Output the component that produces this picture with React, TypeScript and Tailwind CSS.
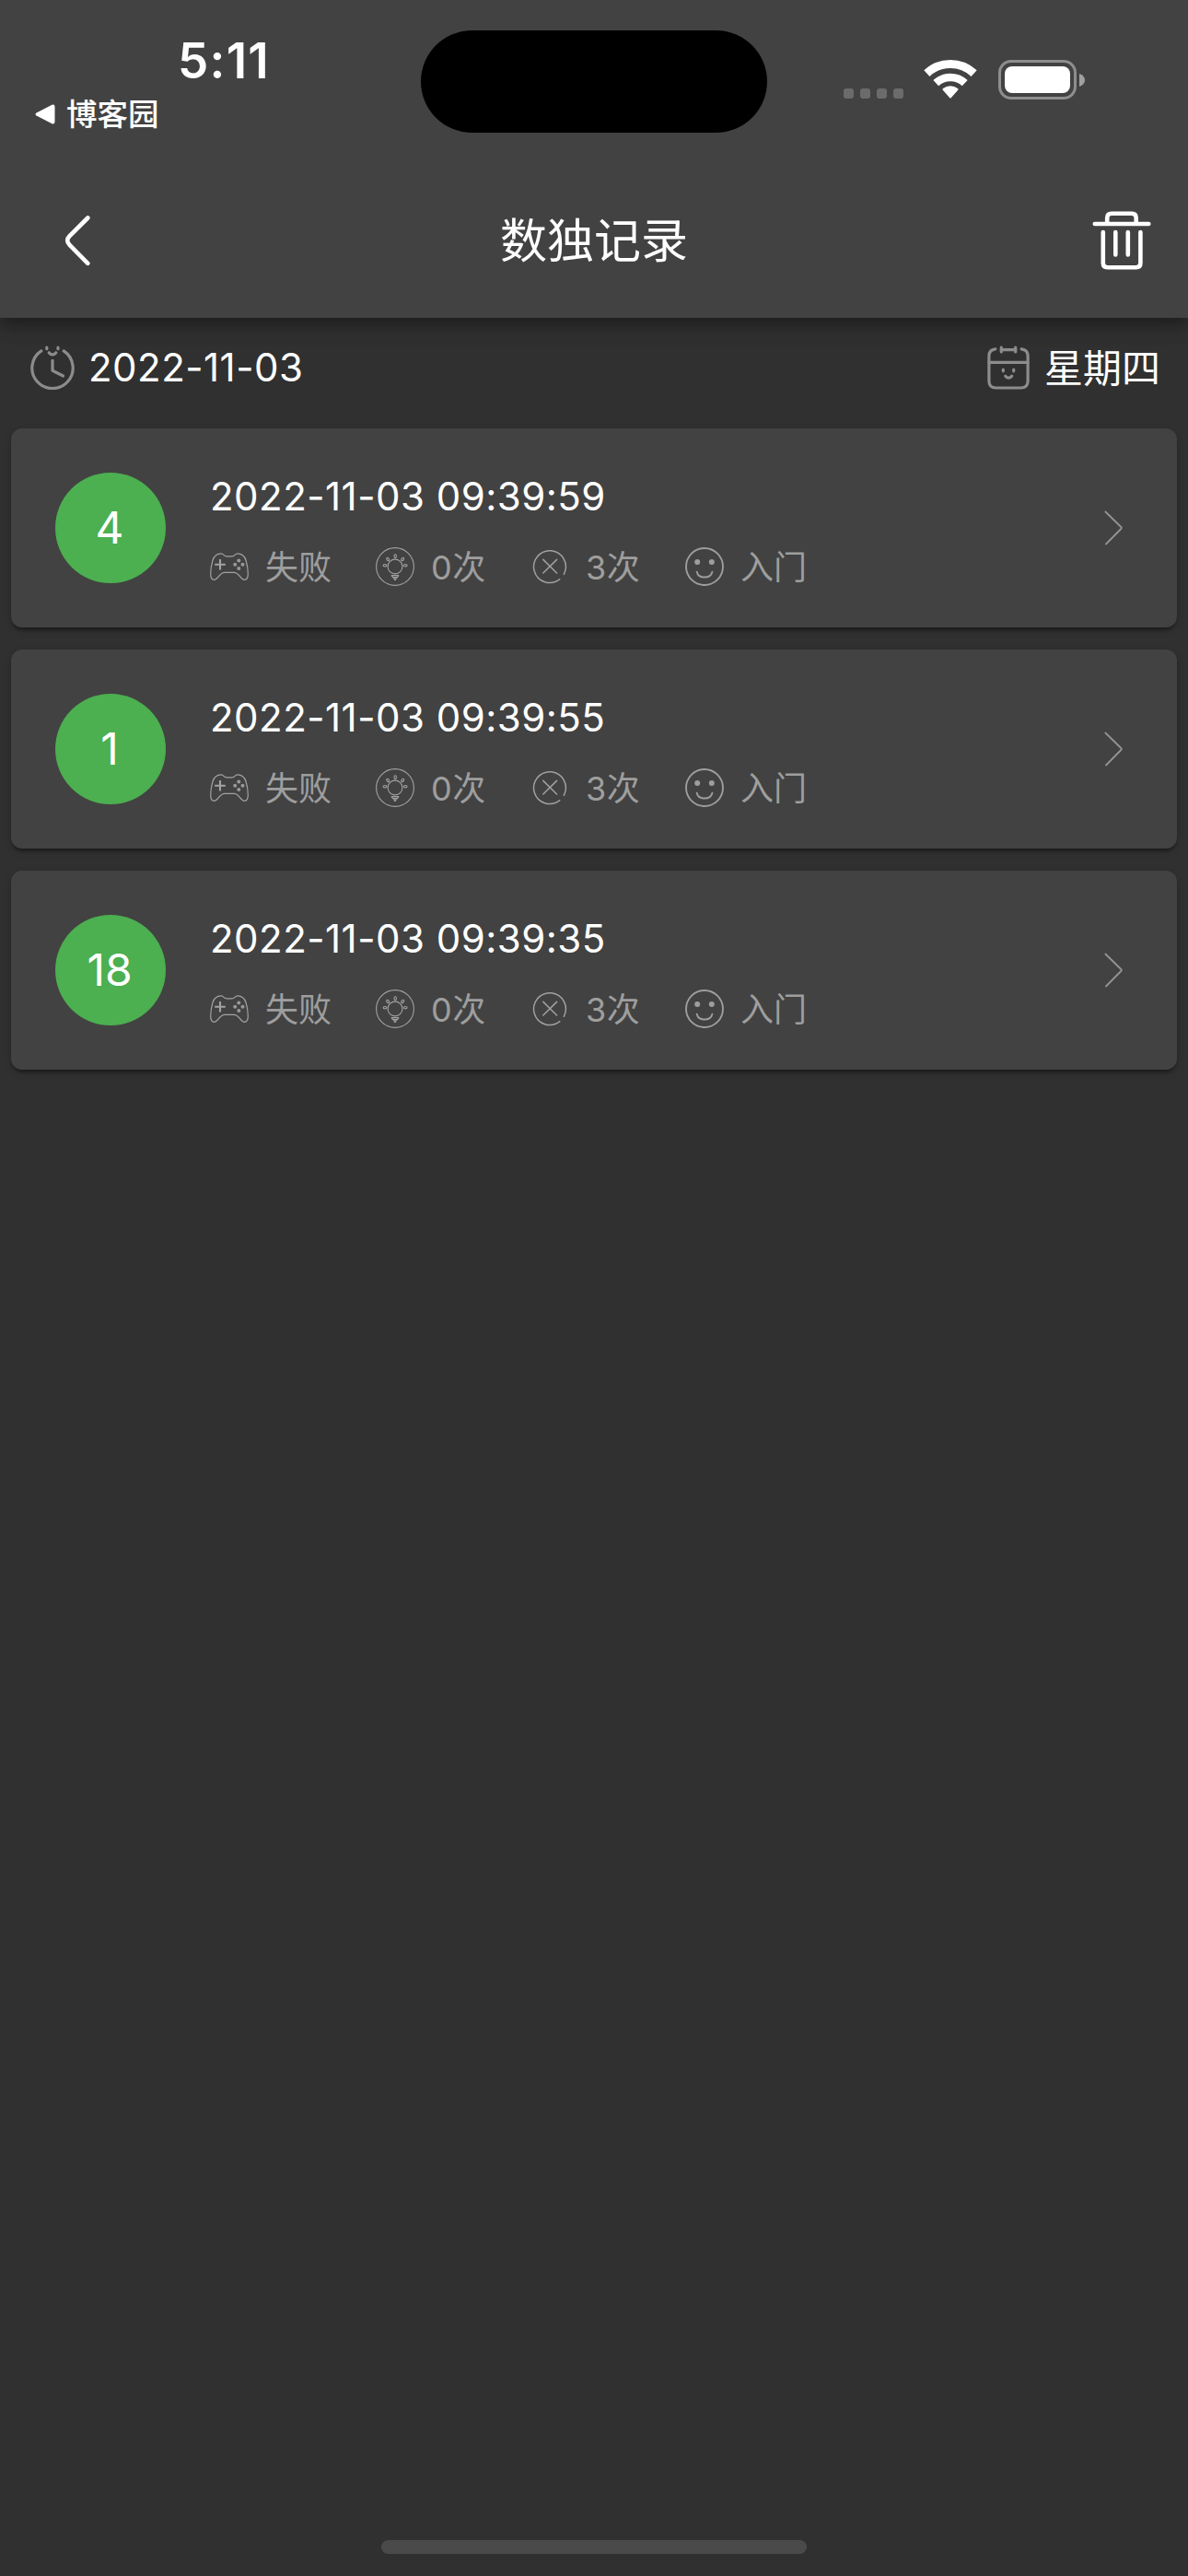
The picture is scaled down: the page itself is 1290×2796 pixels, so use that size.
import type { ReactNode } from 'react';

type GameRecord = { id: string; time: string };

const records: GameRecord[] = [
  { id: '4', time: '2022-11-03 09:39:59' },
  { id: '1', time: '2022-11-03 09:39:55' },
  { id: '18', time: '2022-11-03 09:39:35' },
];

function WifiIcon() {
  return (
    <svg className="h-[42px] w-[58px]" viewBox="0 0 58 42" fill="none" stroke="#fff">
      <path d="M3.4 14.6A37.5 37.5 0 0 1 54.6 14.6" strokeWidth="9" />
      <path d="M13.3 25.2A23 23 0 0 1 44.7 25.2" strokeWidth="8.6" />
      <path d="M20.6 32.6Q20 31.8 21 31A13.3 13.3 0 0 1 37 31Q38 31.8 37.4 32.6L29.7 41.2Q29 42 28.3 41.2Z" fill="#fff" stroke="none" />
    </svg>
  );
}

function BatteryIcon() {
  return (
    <div className="flex items-center">
      <div className="h-[43px] w-[85px] rounded-[14px] border-[3px] border-[#8e8e8e] p-1">
        <div className="h-full w-full rounded-[8px] bg-white" />
      </div>
      <svg className="ml-[3px] h-[14px] w-[6px]" viewBox="0 0 6 14">
        <path d="M0 0C4 1.500 6 4 6 7S4 12.500 0 14Z" fill="#a0a0a0" />
      </svg>
    </div>
  );
}

function BackIcon() {
  return (
    <svg className="h-[60px] w-[40px]" viewBox="0 0 40 60" fill="none" stroke="#fff" strokeWidth="4.6" strokeLinecap="round">
      <path d="M30.300 5.500L10.600 25.200Q5.800 30 10.600 34.800L30.300 54.800" />
    </svg>
  );
}

function TrashIcon() {
  return (
    <svg className="h-[64px] w-[64px]" viewBox="0 0 64 64" fill="none" stroke="#fff" strokeWidth="4.6" strokeLinecap="round">
      <path d="M2.800 14H61.300" />
      <path d="M16.200 14V7.500Q16.200 2.700 21 2.700H43Q47.700 2.700 47.700 7.500V14" strokeLinecap="butt" />
      <path d="M11.800 23V56.500Q11.800 61.200 16.500 61.200H47.700Q52.400 61.200 52.400 56.500V23" />
      <path d="M25.300 23V47.500M38.800 23V47.500" />
    </svg>
  );
}

function ClockIcon() {
  return (
    <svg className="h-[48px] w-[48px]" viewBox="0 0 48 48" fill="none" stroke="#8c8c8c" strokeWidth="3.2" strokeLinecap="round">
      <path d="M11.800 5.900A22.200 22.200 0 1 0 36.200 5.900" />
      <path d="M17.800 2.200V3.700M30 2.200V3.700M20.200 7.800Q24 11.800 27.800 7.800" />
      <path d="M24 16.300V27.300L35.500 33" strokeLinejoin="round" />
    </svg>
  );
}

function CalendarIcon() {
  return (
    <svg className="h-[48px] w-[46px]" viewBox="0 0 46 48" fill="none" stroke="#8c8c8c" strokeWidth="3.2" strokeLinecap="round">
      <path d="M8.800 3.900Q1.900 4.800 1.900 11.500V38.500Q1.900 46 9.400 46H36.600Q44.100 46 44.100 38.500V11.500Q44.100 4.800 37.200 3.900" />
      <path d="M2 18.300H44M15.300 4.700H30.700" />
      <path d="M15.300 2V7M30.700 2V7M17.300 26.200V27.800M28.700 26.200V27.800M19.700 33.200Q23.200 37.200 26.700 33.200" />
    </svg>
  );
}

function GamepadIcon() {
  return (
    <svg className="h-[42px] w-[42px]" viewBox="0 0 42 42" fill="none" stroke="#a2a2a2" strokeWidth="1.2">
      <path d="M12 6.800C7 6.800 4.500 9.500 3 14C1.500 19 .7 24 .7 29C.7 33 2 35.300 4.500 35.300C8.800 35.300 10 27.300 16 27.300H26C32 27.300 33.200 35.300 37.500 35.300C40 35.300 41.300 33 41.300 29C41.300 24 40.500 19 39 14C37.500 9.500 35 6.800 30 6.800C27 6.800 27 9.900 24 9.900H18C15 9.900 15 6.800 12 6.800Z" />
      <path d="M11 13V24.500M5.200 18.800H16.800" strokeWidth="2.100" />
      <g fill="#999" stroke="none">
        <circle cx="31.300" cy="14.400" r="2" />
        <circle cx="31.300" cy="23" r="2" />
        <circle cx="27.200" cy="18.700" r="2" />
        <circle cx="35.500" cy="18.700" r="2" />
      </g>
    </svg>
  );
}

function BulbIcon() {
  return (
    <svg className="h-[42px] w-[42px]" viewBox="0 0 42 42" fill="none" stroke="#a2a2a2" strokeWidth="1.1">
      <circle cx="21" cy="21" r="20.400" />
      <circle cx="21" cy="21" r="7.900" />
      <ellipse cx="21.200" cy="9.700" rx="1.200" ry="1.900" />
      <ellipse cx="13.200" cy="13" rx="1.200" ry="1.900" transform="rotate(-35 13.200 13)" />
      <ellipse cx="29.200" cy="13" rx="1.200" ry="1.900" transform="rotate(35 29.200 13)" />
      <ellipse cx="10" cy="19.700" rx="1.900" ry="1.200" />
      <ellipse cx="32.200" cy="19.700" rx="1.900" ry="1.200" />
      <path d="M17.200 30.600H24.800L23.500 32.600H18.500ZM19 34H23M20 35.400H22" strokeLinejoin="round" />
    </svg>
  );
}

function MistakeIcon() {
  return (
    <svg className="h-[42px] w-[42px]" viewBox="0 0 42 42" fill="none" stroke="#a0a0a0" strokeWidth="1.500" strokeLinecap="round">
      <path d="M36.300 29.300A17.400 17.400 0 1 0 31.800 34.700" />
      <path d="M13.800 13.400L28.600 28M28.600 13.400L13.800 28" />
    </svg>
  );
}

function SmileIcon() {
  return (
    <svg className="h-[42px] w-[42px]" viewBox="0 0 42 42" fill="none" stroke="#9e9e9e" strokeWidth="1.900" strokeLinecap="round">
      <circle cx="21" cy="21" r="20" />
      <path d="M12.700 26.700C14.500 34.500 27.500 34.500 29.400 26.700" />
      <circle cx="13.200" cy="16" r="3" fill="#9e9e9e" stroke="none" />
      <circle cx="28.800" cy="16" r="3" fill="#9e9e9e" stroke="none" />
    </svg>
  );
}

function Stat({ icon, wide, children }: { icon: ReactNode; wide?: boolean; children: ReactNode }) {
  return (
    <div className="flex items-center gap-[18px]">
      {icon}
      <span className={wide ? 'w-[72px] pt-0.5 whitespace-nowrap' : 'w-[60px] pt-0.5 whitespace-nowrap tracking-[0.5px]'}>{children}</span>
    </div>
  );
}

function RecordCard({ record }: { record: GameRecord }) {
  return (
    <li className="flex h-[216px] items-center rounded-[12px] bg-[#424242] pr-[57px] pl-12 shadow-[0_6px_3px_-3px_rgba(0,0,0,0.2),0_3px_3px_rgba(0,0,0,0.14),0_3px_9px_rgba(0,0,0,0.12)]">
      <div className="flex size-[120px] items-center justify-center rounded-full bg-[#4caf50] pr-0.5 text-[48px] leading-none">
        {record.id}
      </div>
      <div className="ml-12 flex flex-1 flex-col gap-[19px] pt-[5px]">
        <h2 className="text-[42px] leading-[60px] tracking-[0.48px]">{record.time}</h2>
        <div className="flex h-[54px] items-center gap-12 text-[36px] leading-[54px] text-[#9e9e9e]">
          <Stat icon={<GamepadIcon />} wide>失败</Stat>
          <Stat icon={<BulbIcon />}>0次</Stat>
          <Stat icon={<MistakeIcon />}>3次</Stat>
          <Stat icon={<SmileIcon />} wide>入门</Stat>
        </div>
      </div>
      <svg className="h-[42px] w-[24px]" viewBox="0 0 24 42" fill="none" stroke="#949494" strokeWidth="1.800" strokeLinecap="round">
        <path d="M3.400 3.500L20.300 20Q21.400 21 20.300 22L4 38.500" />
      </svg>
    </li>
  );
}

export default function App() {
  return (
    <div className="flex h-[2796px] w-[1290px] flex-col overflow-hidden bg-[#303030] font-['Inter','Noto_Sans_CJK_SC',sans-serif] text-white">
      <header className="relative flex h-[345px] shrink-0 flex-col bg-[#424242] shadow-[0_6px_12px_-3px_rgba(0,0,0,0.2),0_12px_15px_rgba(0,0,0,0.14),0_3px_30px_rgba(0,0,0,0.12)]">
        <div className="flex h-[177px] items-start">
          <div className="w-[457px] pt-[36px]">
            <div className="pl-[193px] text-[53px] leading-[60px] font-semibold tracking-[1.2px]">5:11</div>
            <div className="flex items-center gap-[12px] pl-[38px] text-[33.5px] leading-[56px] font-medium">
              <svg className="h-[22px] w-[22px]" viewBox="0 0 22 22">
                <path d="M1.500 9.500L18.500 .8Q21.500 -.3 21.500 3V19Q21.500 22.300 18.500 21.200L1.500 12.500Q-.5 11 1.500 9.500Z" fill="#fff" />
              </svg>
              博客园
            </div>
          </div>
          <div className="mt-[33px] h-[111px] w-[376px] rounded-full bg-black" />
          <div className="ml-[83px] flex items-start pt-[65px]">
            <div className="mt-[31px] flex gap-[7px]">
              {[0, 1, 2, 3].map((dot) => (
                <span key={dot} className="size-[11px] rounded-[3px] bg-[#6b6b6b]" />
              ))}
            </div>
            <div className="ml-[22px] flex gap-[23px]">
              <WifiIcon />
              <BatteryIcon />
            </div>
          </div>
        </div>
        <div className="flex h-[168px] items-center justify-between pr-10 pl-[65px]">
          <div className="flex w-[64px]"><BackIcon /></div>
          <h1 className="mr-[25px] pt-0.5 text-[51px] leading-[72px]">数独记录</h1>
          <TrashIcon />
        </div>
      </header>
      <main className="flex-1 px-3">
        <div className="flex h-[120px] items-center justify-between pr-[18px] pb-3 pl-[21px] text-[42px] leading-[60px]">
          <div className="flex items-center gap-[15px]">
            <ClockIcon />
            <span className="tracking-[0.48px]">2022-11-03</span>
          </div>
          <div className="flex items-center gap-4">
            <CalendarIcon />
            <span className="pt-px">星期四</span>
          </div>
        </div>
        <ul className="flex flex-col gap-6">
          {records.map((record) => (
            <RecordCard key={record.id} record={record} />
          ))}
        </ul>
      </main>
      <div className="mx-auto mb-6 h-[15px] w-[462px] rounded-full bg-[#4a4a4a]" />
    </div>
  );
}
